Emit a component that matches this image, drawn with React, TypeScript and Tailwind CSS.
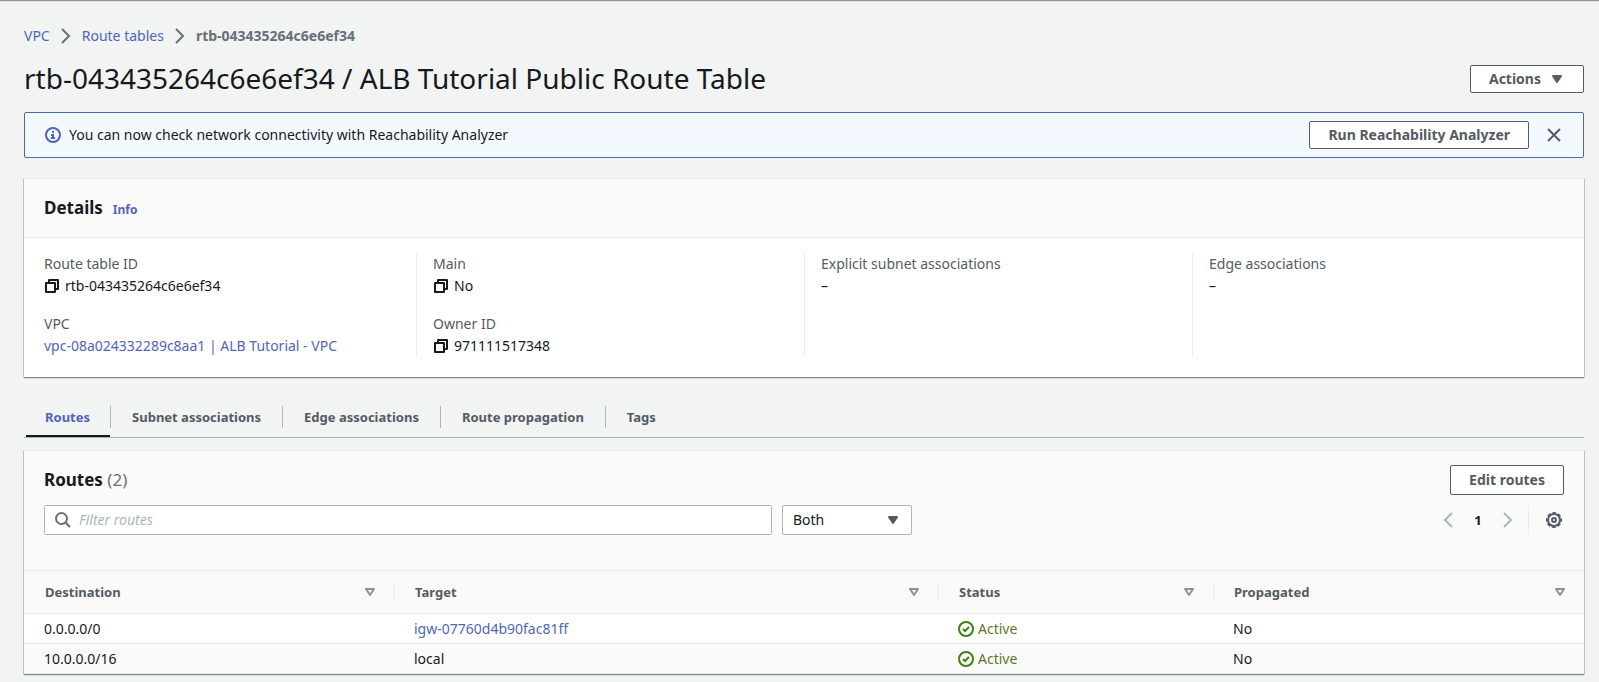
import type { ReactNode } from "react";

const vp = "shrink-0 fill-none";

function ChevronRight({ className = "" }: { className?: string }) {
  return (
    <svg viewBox="0 0 16 16" className={`size-4 ${vp} ${className}`} stroke="currentColor" strokeWidth="2" aria-hidden="true">
      <path d="m4 1 7 7-7 7" />
    </svg>
  );
}

function ChevronLeft() {
  return (
    <svg viewBox="0 0 16 16" className={`size-4 ${vp}`} stroke="currentColor" strokeWidth="2" aria-hidden="true">
      <path d="M12 1 5 8l7 7" />
    </svg>
  );
}

function Caret({ className = "" }: { className?: string }) {
  return (
    <svg viewBox="0 0 16 16" className={`size-4 shrink-0 ${className}`} fill="currentColor" stroke="currentColor" strokeWidth="2" strokeLinejoin="round" aria-hidden="true">
      <path d="M4 5h8l-4 6z" />
    </svg>
  );
}

function SortIcon() {
  return (
    <svg viewBox="0 0 16 16" className={`size-4 ${vp} text-[#879596]`} stroke="currentColor" strokeWidth="2" strokeLinejoin="round" aria-hidden="true">
      <path d="M4 5h8l-4 6z" />
    </svg>
  );
}

function InfoIcon() {
  return (
    <svg viewBox="0 0 16 16" className={`size-4 ${vp} text-[#4a68b5]`} stroke="currentColor" strokeWidth="2" aria-hidden="true">
      <circle cx="8" cy="8" r="7" />
      <path d="M6 8h2v3M6 11h4M7 5h2" />
    </svg>
  );
}

function CloseIcon() {
  return (
    <svg viewBox="0 0 16 16" className={`size-4 ${vp}`} stroke="currentColor" strokeWidth="2" aria-hidden="true">
      <path d="m2 2 12 12M14 2 2 14" />
    </svg>
  );
}

function CopyIcon() {
  return (
    <svg viewBox="0 0 16 16" className={`size-4 ${vp}`} stroke="currentColor" strokeWidth="2" strokeLinejoin="round" aria-hidden="true">
      <path d="M2 5h9v9H2zM5 5V2h9v9h-3" />
    </svg>
  );
}

function CheckIcon() {
  return (
    <svg viewBox="0 0 16 16" className={`size-4 ${vp}`} stroke="currentColor" strokeWidth="2" aria-hidden="true">
      <circle cx="8" cy="8" r="7" />
      <path d="m5 8 2 2 4-4" />
    </svg>
  );
}

function SearchIcon() {
  return (
    <svg viewBox="0 0 16 16" className={`size-4 ${vp} text-[#687078]`} stroke="currentColor" strokeWidth="2" aria-hidden="true">
      <circle cx="6.500" cy="6.500" r="5.500" />
      <path d="m10.500 10.500 4.500 4.500" />
    </svg>
  );
}

function GearIcon() {
  return (
    <svg viewBox="0 0 16 16" className={`size-4 ${vp}`} stroke="currentColor" strokeWidth="2" aria-hidden="true">
      <circle cx="8" cy="8" r="6" />
      <circle cx="8" cy="8" r="7.200" strokeWidth="1.600" strokeDasharray="3.600 2.055" strokeDashoffset="1.800" />
      <circle cx="8" cy="8" r="2" />
    </svg>
  );
}

function Button({ children, className = "" }: { children: ReactNode; className?: string }) {
  return (
    <button type="button" className={`flex items-center justify-center gap-2 rounded-xs border border-[#545b64] bg-white px-[18px] font-bold text-[#545b64] ${className}`}>
      {children}
    </button>
  );
}

const card = "border-t border-[#eaeded] bg-white shadow-[0_1px_1px_0_rgba(0,28,36,0.5),1px_0_0_0_rgba(0,28,36,0.15),-1px_0_0_0_rgba(0,28,36,0.15)]";
const link = "text-[#4f66b8] hover:underline";

function Field({ label, copy, children }: { label: string; copy?: boolean; children: ReactNode }) {
  return (
    <div>
      <dt className="text-[#545b64]">{label}</dt>
      <dd className="flex items-center gap-[5px]">
        {copy && (
          <button type="button" aria-label={`Copy ${label}`}>
            <CopyIcon />
          </button>
        )}
        {children}
      </dd>
    </div>
  );
}

const tabs = ["Routes", "Subnet associations", "Edge associations", "Route propagation", "Tags"];

const columns = [
  { name: "Destination", width: "w-[370px]" },
  { name: "Target", width: "w-[544px]" },
  { name: "Status", width: "w-[275px]" },
  { name: "Propagated", width: "w-[371px]" },
];

const routes = [
  { destination: "0.0.0.0/0", target: "igw-07760d4b90fac81ff", linked: true, status: "Active", propagated: "No" },
  { destination: "10.0.0.0/16", target: "local", linked: false, status: "Active", propagated: "No" },
];

export default function App() {
  return (
    <div className="min-h-screen border-t border-[#8f959a] bg-[#f2f3f3] pr-[15px] pb-1 pl-6 font-['Noto_Sans',sans-serif] text-sm leading-[22px] text-[#16191f] shadow-[inset_0_1px_0_0_#dcdee0]">
      <nav aria-label="Breadcrumb" className="pt-6">
        <ol className="flex items-center gap-2">
          <li><a href="#vpc" className={link}>VPC</a></li>
          <li className="flex items-center gap-2">
            <ChevronRight className="text-[#687078]" />
            <a href="#route-tables" className={link}>Route tables</a>
          </li>
          <li className="flex items-center gap-2 font-bold text-[#687078]">
            <ChevronRight />
            rtb-043435264c6e6ef34
          </li>
        </ol>
      </nav>

      <header className="mt-3 flex items-end justify-between">
        <h1 className="text-[28px] leading-[38px]">rtb-043435264c6e6ef34 / ALB Tutorial Public Route Table</h1>
        <Button className="mb-1 h-7">
          Actions
          <Caret />
        </Button>
      </header>

      <section aria-label="Notification" className="mt-[15px] flex h-[46px] items-center rounded-xs border border-[#4a68b5] bg-[#f4f9ff] pr-[21px] pl-5">
        <InfoIcon />
        <p className="ml-2 grow">You can now check network connectivity with Reachability Analyzer</p>
        <Button className="h-7">Run Reachability Analyzer</Button>
        <button type="button" aria-label="Dismiss" className="ml-[17px] text-[#545b64]">
          <CloseIcon />
        </button>
      </section>

      <section className={`mt-5 ${card}`}>
        <div className="flex h-[59px] items-center gap-[10px] border-b border-[#eaeded] bg-[#fafafa] px-5">
          <h2 className="text-[17px] font-bold">Details</h2>
          <a href="#info" className={`pt-1 text-xs font-bold ${link}`}>Info</a>
        </div>
        <div className="grid grid-cols-4 px-1 pt-[15px] pb-5">
          <dl className="flex flex-col gap-4 px-4">
            <Field label="Route table ID" copy>rtb-043435264c6e6ef34</Field>
            <Field label="VPC">
              <a href="#vpc-detail" className={link}>vpc-08a024332289c8aa1 | ALB Tutorial - VPC</a>
            </Field>
          </dl>
          <dl className="flex flex-col gap-4 border-l border-[#eaeded] px-4">
            <Field label="Main" copy>No</Field>
            <Field label="Owner ID" copy>971111517348</Field>
          </dl>
          <dl className="border-l border-[#eaeded] px-4">
            <Field label="Explicit subnet associations">–</Field>
          </dl>
          <dl className="border-l border-[#eaeded] px-4">
            <Field label="Edge associations">–</Field>
          </dl>
        </div>
      </section>

      <div role="tablist" className="mt-[21px] flex h-10 border-b border-[#aab7b8] pl-0.5 text-[13px] font-bold text-[#545b64]">
        {tabs.map((tab, i) => (
          <div key={tab} className="flex">
            {i > 0 && <span className="mt-2 h-[22px] w-px bg-[#aab7b8]" />}
            <button
              type="button"
              role="tab"
              aria-selected={i === 0}
              className={i === 0 ? "border-b-2 border-[#16191f] pr-5 pl-[19px] text-[#4f66b8]" : "border-b-2 border-transparent px-[21px]"}
            >
              {tab}
            </button>
          </div>
        ))}
      </div>

      <section className={`mt-3 ${card}`}>
        <div className="bg-[#fafafa] px-5 pt-[14px] pb-[35px]">
          <div className="flex items-center justify-between">
            <h2 className="text-[17px] font-bold">
              Routes <span className="font-normal text-[#687078]">(2)</span>
            </h2>
            <Button className="h-[30px]">Edit routes</Button>
          </div>
          <div className="mt-[10px] flex items-center justify-between">
            <div className="flex grow gap-[10px]">
              <label className="flex h-[30px] max-w-[728px] grow items-center gap-2 rounded-xs border border-[#aab7b8] bg-white px-[10px]">
                <SearchIcon />
                <input type="search" aria-label="Filter routes" placeholder="Filter routes" className="grow outline-none placeholder:text-[#aab7b8] placeholder:italic" />
              </label>
              <div className="grid w-[130px] items-center">
                <select aria-label="Route type" className="col-start-1 row-start-1 h-[30px] appearance-none rounded-xs border border-[#aab7b8] bg-white px-[10px]">
                  <option>Both</option>
                </select>
                <Caret className="pointer-events-none col-start-1 row-start-1 mr-[11px] justify-self-end text-[#545b64]" />
              </div>
            </div>
            <div className="mr-0.5 flex h-[30px] items-center">
              <button type="button" aria-label="Previous page" className="text-[#aab7b8]"><ChevronLeft /></button>
              <button type="button" className="w-11 text-[13px] font-bold">1</button>
              <button type="button" aria-label="Next page" className="text-[#aab7b8]"><ChevronRight /></button>
              <span className="ml-3 h-full w-px bg-[#eaeded]" />
              <button type="button" aria-label="Preferences" className="ml-[17px] text-[#545b64]"><GearIcon /></button>
            </div>
          </div>
        </div>
        <table className="w-full table-fixed border-collapse text-left">
          <thead>
            <tr className="h-[43px] border-y border-[#eaeded] bg-[#fafafa] text-[13px] text-[#545b64]">
              {columns.map((c, i) => (
                <th key={c.name} scope="col" className={`${c.width} p-0`}>
                  <div className={`flex items-center justify-between border-l pr-4 pl-5 ${i > 0 ? "border-[#eaeded]" : "border-transparent"}`}>
                    {c.name}
                    <button type="button" aria-label={`Sort by ${c.name}`}><SortIcon /></button>
                  </div>
                </th>
              ))}
            </tr>
          </thead>
          <tbody>
            {routes.map((r) => (
              <tr key={r.destination} className="h-[30px] border-b border-[#eaeded] even:bg-[#fafafa]">
                <td className="px-5 py-0">{r.destination}</td>
                <td className="px-5 py-0">{r.linked ? <a href="#gateway" className={link}>{r.target}</a> : r.target}</td>
                <td className="px-5 py-0">
                  <span className="flex items-center gap-1 text-[#5c7a1e]">
                    <span className="text-[#3f8114]"><CheckIcon /></span>
                    {r.status}
                  </span>
                </td>
                <td className="px-5 py-0">{r.propagated}</td>
              </tr>
            ))}
          </tbody>
        </table>
      </section>
    </div>
  );
}
